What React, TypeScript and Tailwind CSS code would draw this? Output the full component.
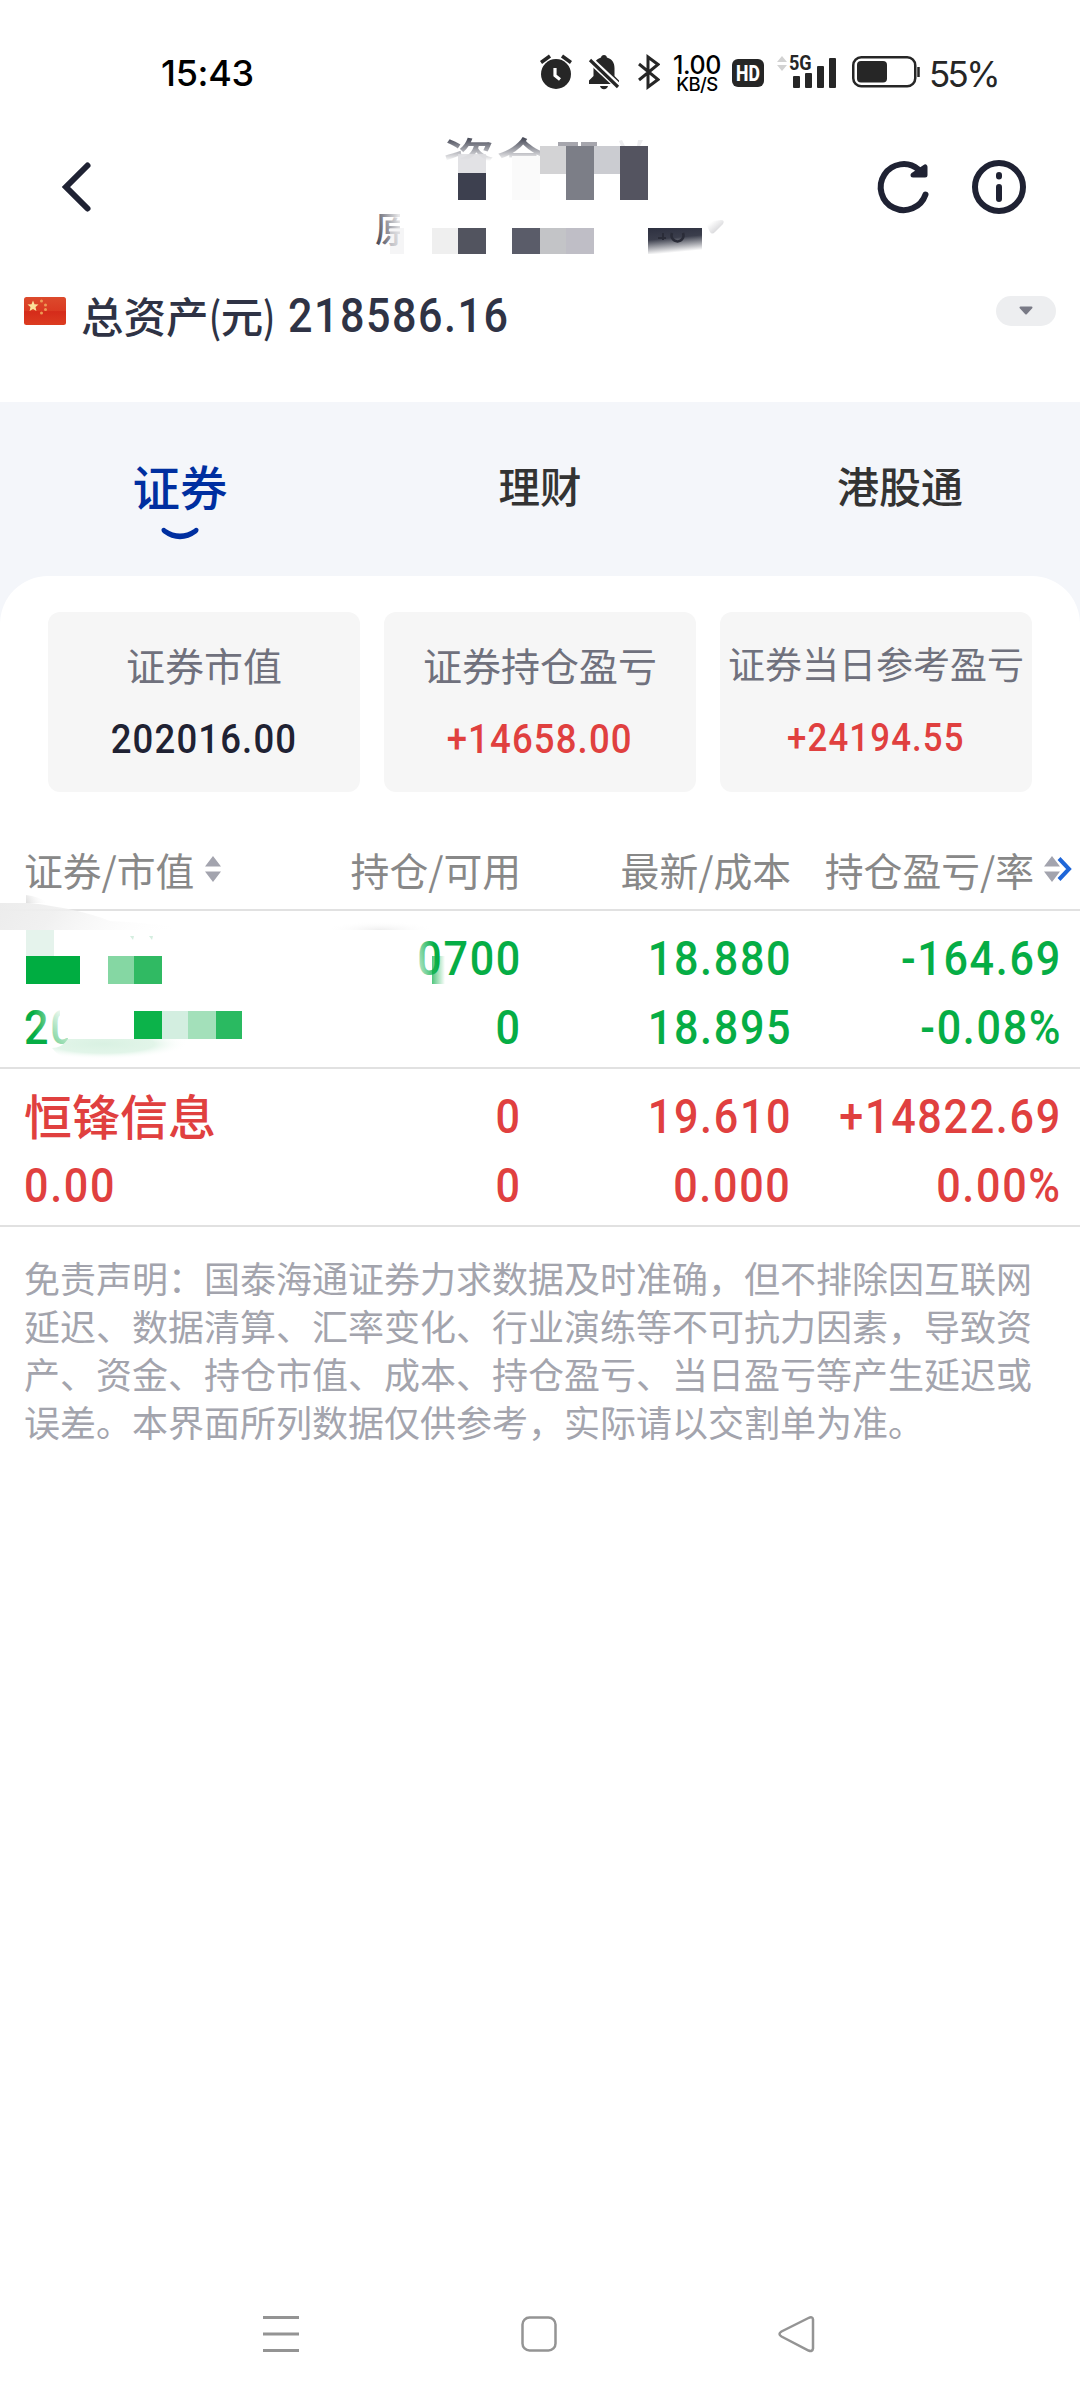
import React from 'react';
import clsx from 'clsx';

interface Stat {
  label: string;
  value: string;
  valueColor: string;
  compact?: boolean;
}

interface Holding {
  name: React.ReactNode;
  marketValue: React.ReactNode;
  position: React.ReactNode;
  available: string;
  latest: string;
  cost: string;
  profit: string;
  rate: string;
  color: string;
}

const stats: Stat[] = [
  { label: '证券市值', value: '202016.00', valueColor: 'text-[#1f2233]' },
  { label: '证券持仓盈亏', value: '+14658.00', valueColor: 'text-[#e0403f]' },
  { label: '证券当日参考盈亏', value: '+24194.55', valueColor: 'text-[#e0403f]', compact: true },
];

const holdings: Holding[] = [
  {
    name: '',
    marketValue: '20',
    position: '0700',
    available: '0',
    latest: '18.880',
    cost: '18.895',
    profit: '-164.69',
    rate: '-0.08%',
    color: 'text-[#06ad45]',
  },
  {
    name: '恒锋信息',
    marketValue: '0.00',
    position: '0',
    available: '0',
    latest: '19.610',
    cost: '0.000',
    profit: '+14822.69',
    rate: '0.00%',
    color: 'text-[#e0403f]',
  },
];

const disclaimer =
  '免责声明：国泰海通证券力求数据及时准确，但不排除因互联网延迟、数据清算、汇率变化、行业演练等不可抗力因素，导致资产、资金、持仓市值、成本、持仓盈亏、当日盈亏等产生延迟或误差。本界面所列数据仅供参考，实际请以交割单为准。';

const StatusBar = () => (
  <div className="flex h-[144px] items-center justify-between pr-[82px] pl-[161px] font-['Inter','Noto_Sans_CJK_SC',sans-serif] text-[#262626]">
    <span className="mt-[2px] text-[36px] leading-none font-medium tracking-[-0.3px] text-black">15:43</span>
    <div className="flex items-center">
      <svg className="mr-4" width="32" height="36" viewBox="0 0 32 36" fill="none">
        <circle cx="16" cy="20" r="15" fill="#262626" />
        <path d="M1 8.500 10 2M31 8.500 22 2" stroke="#262626" strokeWidth="3.600" />
        <path d="M15 14v7.500l5 4" stroke="#fff" strokeWidth="3.200" />
      </svg>
      <svg className="mr-[18px]" width="32" height="36" viewBox="0 0 32 36">
        <path
          d="M16 1c1.800 0 2.700 1.200 2.900 2.600C24 5 26.500 9 26.500 14v8l4.500 4.500V30H1v-3.500L5.500 22v-8c0-5 3-9 7.500-10.400C13.300 2.200 14.200 1 16 1zM12 32h8c-.4 2-1.900 3.200-4 3.200S12.400 34 12 32z"
          fill="#262626"
        />
        <path d="M-1 3 31 33" stroke="#fff" strokeWidth="7" />
        <path d="M2 6 30 33" stroke="#262626" strokeWidth="3.200" />
      </svg>
      <svg className="mr-[13px]" width="22" height="36" viewBox="0 0 22 36" fill="none">
        <path d="M1 10 20 25.500 10 33V3l10 7.500L1 26" stroke="#262626" strokeWidth="3" />
      </svg>
      <div className="mt-[3px] mr-[11px] flex w-[48px] flex-col items-center text-black">
        <span className="text-[25px] leading-[20px] font-medium tracking-[-0.4px]">1.00</span>
        <span className="text-[18.500px] leading-[18px] font-medium tracking-[-0.600px]">KB/S</span>
      </div>
      <span className="mt-[2px] mr-[12px] flex h-[28px] w-[32px] items-center justify-center rounded-[6px] bg-[#262626] font-['Roboto',sans-serif] text-[22px] font-extrabold text-white">
        <span className="scale-x-[0.8]">HD</span>
      </span>
      <div className="relative mr-4 h-[34px] w-[60px]">
        <svg width="61" height="34" viewBox="0 0 61 34" fill="#262626">
          <path d="M1 7 6 1l5 6zM1 10h10l-5 6z" fill="#d2d2d2" />
          <rect x="17" y="21" width="7" height="12" rx="1" />
          <rect x="29" y="18" width="7" height="15" rx="1" />
          <rect x="41" y="11" width="7" height="22" rx="1" />
          <rect x="53" y="3" width="7" height="30" rx="1" />
        </svg>
        <span className="absolute top-0 left-[13px] origin-left scale-x-[0.86] font-['Roboto',sans-serif] text-[21px] leading-[17px] font-bold">
          5G
        </span>
      </div>
      <svg className="mr-[9px]" width="68" height="32" viewBox="0 0 68 32" fill="none">
        <rect x="1.250" y="1.250" width="62" height="29" rx="8" stroke="#262626" strokeWidth="2.500" />
        <rect x="5" y="5" width="30" height="21.500" rx="4" fill="#262626" />
        <path d="M66.500 11v10" stroke="#262626" strokeWidth="2.500" />
      </svg>
      <span className="mt-[4px] w-[69px] text-[35px] leading-none font-normal tracking-[-2.700px]">55%</span>
    </div>
  </div>
);

// Mosaic painted over the account title and number
const TitleMosaic = () => (
  <svg className="absolute inset-0" width="380" height="140" viewBox="360 130 380 140">
    <defs>
      <linearGradient id="fadeDown" x1="0" y1="0" x2="0" y2="1">
        <stop offset="0" stopColor="#fff" stopOpacity="0.100" />
        <stop offset="1" stopColor="#fff" />
      </linearGradient>
      <linearGradient id="fadeRight" x1="0" y1="1" x2="1" y2="0.600">
        <stop offset="0" stopColor="#fff" stopOpacity="0" />
        <stop offset="1" stopColor="#fff" stopOpacity="0.900" />
      </linearGradient>
      <linearGradient id="darkFade" x1="0" y1="0" x2="0.200" y2="1">
        <stop offset="0" stopColor="#2d3040" />
        <stop offset="0.450" stopColor="#3b3e4c" />
        <stop offset="1" stopColor="#fff" />
      </linearGradient>
      <linearGradient id="tick" x1="0" y1="0" x2="1" y2="1">
        <stop offset="0.200" stopColor="#fff" />
        <stop offset="1" stopColor="#c4c4c8" />
      </linearGradient>
    </defs>
    <rect x="440" y="136" width="220" height="25" fill="url(#fadeDown)" />
    <rect x="440" y="161" width="220" height="46" fill="#fff" />
    <path d="M558 142h20v4h-14v6h-6zM581 142h16v4h-16z" fill="#a6a6ad" />
    <path d="M619 141l3-1 3 6h-4zM638 140h5l-3 6h-3z" fill="#ececee" />
    <rect x="458" y="154" width="28" height="19" fill="#dddde0" fillOpacity="0.850" />
    <rect x="458" y="173" width="28" height="27" fill="#3d404f" />
    <rect x="512" y="156" width="28" height="44" fill="#fafafa" />
    <rect x="540" y="146" width="26" height="28" fill="#d3d3d5" />
    <rect x="566" y="146" width="28" height="54" fill="#7c7e87" />
    <rect x="594" y="146" width="26" height="28" fill="#cbccd1" />
    <rect x="620" y="146" width="28" height="54" fill="#545460" />
    <rect x="374" y="206" width="30" height="52" fill="url(#fadeRight)" />
    <rect x="400" y="206" width="16" height="52" fill="#fff" />
    <rect x="390" y="228" width="14" height="26" fill="#ececee" fillOpacity="0.500" />
    <rect x="432" y="228" width="26" height="26" fill="#efefef" />
    <rect x="458" y="228" width="28" height="26" fill="#52545f" />
    <rect x="512" y="228" width="28" height="26" fill="#5a5c69" />
    <rect x="540" y="228" width="26" height="26" fill="#c3c4c7" />
    <rect x="566" y="228" width="28" height="26" fill="#bfbec6" />
    <rect x="648" y="228" width="54" height="26" fill="url(#darkFade)" />
    <path d="M658 238h8m-3-5v7" stroke="#2a2c38" strokeWidth="2" />
    <path d="M672 233a6 6 0 1 0 11 0" stroke="#2a2c38" strokeWidth="2.500" fill="none" />
    <path d="M707 226c-1-2 2-4 6-5l8-1q4 0 2 4l-8 8q-3 3-5 0z" fill="url(#tick)" />
  </svg>
);

const Header = () => (
  <div className="flex h-[126px] items-start pr-[53px] pl-[60px]">
    <svg className="mt-[14px]" width="34" height="58" viewBox="0 0 34 58" fill="none">
      <path d="M27.500 7.500 6 29 27.500 50.500" stroke="#1f2233" strokeWidth="6" strokeLinecap="round" />
    </svg>
    <div className="relative -mt-[14px] ml-[266px] h-[140px] w-[380px]">
      <p className="-mt-[4px] pl-[83px] text-[52px] leading-[68px] font-medium tracking-[2px] whitespace-nowrap text-[#1f2233]">
        资金
      </p>
      <p className="pt-[2px] pl-[15px] text-[36px] leading-[62px] font-medium text-[#1f2233]">原</p>
      <TitleMosaic />
    </div>
    <div className="mt-[14px] ml-auto flex gap-[38px]">
      <svg width="58" height="58" viewBox="0 0 58 58" fill="none">
        <path d="M50.500 36.500A23 23 0 1 1 43.500 11.500" stroke="#1f2233" strokeWidth="6" strokeLinecap="round" />
        <path d="M50 9V17H38z" fill="#1f2233" stroke="#1f2233" strokeWidth="5" strokeLinejoin="round" />
      </svg>
      <svg width="56" height="58" viewBox="0 0 56 58" fill="none" stroke="#1f2233" strokeWidth="6" strokeLinecap="round">
        <circle cx="28" cy="29" r="24" />
        <path d="M28 17v1.500M28 29v12" />
      </svg>
    </div>
  </div>
);

const ChinaFlag = () => (
  <svg width="42" height="28" viewBox="0 0 42 28">
    <defs>
      <linearGradient id="flag" x1="0" y1="0" x2="0" y2="1">
        <stop offset="0" stopColor="#dc4a2c" />
        <stop offset="0.500" stopColor="#da3a22" />
        <stop offset="0.520" stopColor="#d52b1a" />
        <stop offset="1" stopColor="#dc3c20" />
      </linearGradient>
    </defs>
    <rect width="42" height="28" rx="2.500" fill="url(#flag)" />
    <path d="m9 3.500 1.500 3.700 4 .3-3 2.600.9 3.900L9 11.900 5.600 14l.9-3.900-3-2.600 4-.3z" fill="#fbe29a" />
    <g fill="#ee9c55">
      <circle cx="17.500" cy="4" r="1.500" />
      <circle cx="21.500" cy="8" r="1.500" />
      <circle cx="21.500" cy="12.500" r="1.500" />
      <circle cx="17.500" cy="16" r="1.500" />
    </g>
  </svg>
);

const TotalAssets = () => (
  <div className="flex h-[132px] items-start justify-between px-6 pt-[26px]">
    <div className="flex items-start text-[#2f3345]">
      <div className="mt-[1px]">
        <ChinaFlag />
      </div>
      <span className="-mt-[1px] ml-[15px] flex w-[207px] text-[42.500px] leading-[40px] font-medium whitespace-nowrap">
        总资产
        <span className="origin-left scale-x-[0.8]">(</span>
        <span className="-ml-[3px]">元</span>
        <span className="origin-left scale-x-[0.8]">)</span>
      </span>
      <span className="origin-left scale-x-[0.88] font-['Roboto',sans-serif] text-[49px] leading-[39px] font-medium tracking-[1.700px]">
        218586.16
      </span>
    </div>
    <button className="flex h-[30px] w-[60px] items-center justify-center rounded-full bg-[#edeef0]">
      <svg width="14" height="10" viewBox="0 0 14 10">
        <path d="M1.500 1.500h11L7 7.500z" fill="#797a86" stroke="#797a86" strokeWidth="2" strokeLinejoin="round" />
      </svg>
    </button>
  </div>
);

const Tabs = () => (
  <div className="grid h-[174px] grid-cols-3 pt-[49px] text-center font-medium text-[#333]">
    <div className="flex flex-col items-center text-[#002fa0]">
      <span className="text-[47.500px] leading-[70px]">证券</span>
      <svg className="mt-[4px]" width="40" height="16" viewBox="0 0 40 16" fill="none">
        <path d="M2 3.500Q4 2 6 4 20 13 34 4q2-2 4-.5 1.500 2-1 4.500Q20 20.500 3 8 .5 5.500 2 3.500z" fill="#002fa0" />
      </svg>
    </div>
    <span className="text-[41.500px] leading-[68px]">理财</span>
    <span className="text-[42px] leading-[68px]">港股通</span>
  </div>
);

const StatCard: React.FC<Stat> = ({ label, value, valueColor, compact }) => (
  <div className="flex h-[180px] flex-col items-center rounded-[12px] bg-[#f6f6f6] pt-[26px]">
    <span
      className={clsx(
        'whitespace-nowrap text-[#70717d]',
        compact ? 'text-[37px] leading-[51px]' : 'text-[39px] leading-[53px]'
      )}
    >
      {label}
    </span>
    <span
      className={clsx(
        "scale-x-[0.88] font-['Roboto',sans-serif] leading-[52px] font-medium tracking-[1.300px]",
        compact ? 'mt-[23px] text-[39.500px]' : 'mt-[22px] text-[41.500px]',
        valueColor
      )}
    >
      {value}
    </span>
  </div>
);

const SortArrows = () => (
  <svg width="18" height="28" viewBox="0 0 18 28" fill="#a3a4ae">
    <path d="M1 11.500 9 1l8 10.500zM1 16.500h16L9 27z" />
  </svg>
);

const TableHead = () => (
  <div className="grid h-[82px] grid-cols-[227px_270px_270px_270px] items-center border-b-2 border-[#e1e1e1] pl-6 text-[38.800px] leading-[60px] whitespace-nowrap text-[#888]">
    <div className="flex items-center gap-[10px]">
      证券/市值
      <SortArrows />
    </div>
    <div className="text-right">持仓/可用</div>
    <div className="text-right">最新/成本</div>
    <div className="relative flex items-center justify-end gap-[9px]">
      持仓盈亏/率
      <svg className="absolute -right-[11px]" width="16" height="24" viewBox="0 0 16 24" fill="none">
        <path d="M3 1.500 13 12 3 22.500" stroke="#1f66d8" strokeWidth="4" />
      </svg>
      <div className="relative flex">
        <SortArrows />
      </div>
    </div>
  </div>
);

const Figure: React.FC<{ children: React.ReactNode; left?: boolean }> = ({ children, left }) => (
  <span
    className={clsx(
      "inline-block scale-x-[0.88] font-['Roboto',sans-serif] text-[49px] font-medium tracking-[1.900px]",
      left ? 'origin-left' : '-mr-[1px] origin-right'
    )}
  >
    {children}
  </span>
);

const HoldingRow: React.FC<Holding> = (row) => (
  <div
    className={clsx(
      'grid h-[158px] grid-cols-[227px_270px_270px_270px] border-b-2 border-[#e1e1e1] pt-[13px] pl-6 text-right leading-[69px] whitespace-nowrap',
      row.color
    )}
  >
    <div className="text-left">
      <div className="-mt-[2px] h-[71px] text-[48px] font-medium">{row.name}</div>
      <div className="h-[69px]">
        <Figure left>{row.marketValue}</Figure>
      </div>
    </div>
    <div>
      <div className="h-[69px]">
        <Figure>{row.position}</Figure>
      </div>
      <div className="h-[69px]">
        <Figure>{row.available}</Figure>
      </div>
    </div>
    <div>
      <div className="h-[69px]">
        <Figure>{row.latest}</Figure>
      </div>
      <div className="h-[69px]">
        <Figure>{row.cost}</Figure>
      </div>
    </div>
    <div>
      <div className="h-[69px]">
        <Figure>{row.profit}</Figure>
      </div>
      <div className="h-[69px]">
        <Figure>{row.rate}</Figure>
      </div>
    </div>
  </div>
);

// Mosaic and smudges painted over the first holding
const RowMosaic = () => (
  <svg className="absolute top-0 left-0" width="540" height="172" viewBox="0 895 540 172">
    <defs>
      <linearGradient id="smudge" x1="0" y1="0" x2="1" y2="0.100">
        <stop offset="0" stopColor="#ececec" />
        <stop offset="0.300" stopColor="#efefef" stopOpacity="0.900" />
        <stop offset="1" stopColor="#fff" stopOpacity="0" />
      </linearGradient>
      <radialGradient id="smudgeSmall" cx="0.500" cy="1" r="0.500">
        <stop offset="0" stopColor="#eeeeee" />
        <stop offset="1" stopColor="#fff" stopOpacity="0" />
      </radialGradient>
      <linearGradient id="cornerSmudge" x1="0" y1="1" x2="1" y2="0.800">
        <stop offset="0" stopColor="#dedede" />
        <stop offset="1" stopColor="#fff" stopOpacity="0" />
      </linearGradient>
      <linearGradient id="whiteRight" x1="0" y1="0.600" x2="1" y2="0.400">
        <stop offset="0" stopColor="#fff" stopOpacity="0" />
        <stop offset="1" stopColor="#fff" stopOpacity="0.500" />
      </linearGradient>
      <linearGradient id="zeroFade" x1="0" y1="1" x2="0.500" y2="0">
        <stop offset="0" stopColor="#fff" stopOpacity="0.400" />
        <stop offset="1" stopColor="#fff" />
      </linearGradient>
      <linearGradient id="whiteLeft" x1="0" y1="1" x2="1" y2="0.700">
        <stop offset="0" stopColor="#fff" />
        <stop offset="1" stopColor="#fff" stopOpacity="0" />
      </linearGradient>
      <linearGradient id="drip" x1="0" y1="0" x2="1" y2="0">
        <stop offset="0" stopColor="#06ad45" stopOpacity="0.700" />
        <stop offset="1" stopColor="#06ad45" stopOpacity="0" />
      </linearGradient>
      <radialGradient id="mint" cx="0.380" cy="0.200" r="0.620">
        <stop offset="0" stopColor="#d9f1e2" />
        <stop offset="0.600" stopColor="#e2f5e9" />
        <stop offset="1" stopColor="#fff" stopOpacity="0" />
      </radialGradient>
    </defs>
    <path d="M26 895q12 1 22 8H26z" fill="url(#cornerSmudge)" />
    <path d="M0 903h30q50 6 80 18 45 2 90 9H0z" fill="url(#smudge)" />
    <rect x="325" y="912" width="110" height="18" fill="url(#smudgeSmall)" />
    <rect x="26" y="930" width="28" height="27" fill="#e5f3ec" />
    <rect x="26" y="956" width="54" height="28" fill="#00ad41" />
    <rect x="108" y="956" width="26" height="28" fill="#85d7a3" />
    <rect x="134" y="956" width="28" height="28" fill="#30ba63" />
    <path d="M130 936h4l-1 4zM149 936h4l-1 4z" fill="#d5eee0" />
    <rect x="34" y="1004" width="16" height="36" fill="url(#whiteRight)" />
    <rect x="50" y="1004" width="20" height="42" fill="url(#zeroFade)" />
    <rect x="60" y="1004" width="22" height="34" fill="#fff" />
    <rect x="68" y="1004" width="14" height="42" fill="#fff" />
    <rect x="134" y="1011" width="28" height="28" fill="#0cb34a" />
    <rect x="162" y="1011" width="26" height="28" fill="#d3eee0" />
    <rect x="188" y="1011" width="28" height="28" fill="#a3e0ba" />
    <rect x="216" y="1011" width="26" height="28" fill="#2aba61" />
    <path d="M68 1039h120v18q-26-2-46 3-40 7-72 1-12-5-18-13 10 0 16-9z" fill="url(#mint)" />
    <rect x="412" y="936" width="26" height="42" fill="url(#whiteLeft)" />
    <rect x="432" y="956" width="13" height="28" fill="url(#drip)" />
  </svg>
);

const NavBar = () => (
  <div className="mt-auto flex h-[132px] items-center justify-between pr-[263px] pl-[261px]">
    <svg width="40" height="40" viewBox="0 0 40 40" stroke="#949494" strokeWidth="3">
      <path d="M2 3.500h36M2 20h36M2 36.500h36" />
    </svg>
    <svg width="40" height="40" viewBox="0 0 40 40" fill="none" stroke="#949494" strokeWidth="2.500">
      <rect x="3.500" y="3.500" width="33" height="33" rx="7" />
    </svg>
    <svg width="40" height="40" viewBox="0 0 40 40" fill="none" stroke="#949494" strokeWidth="2.500">
      <path d="M31.500 4 4.500 17.500q-4 2.500 0 5L31.500 36.500q4 1.500 4.500-2v-29q-.5-3.500-4.500-1.500z" />
    </svg>
  </div>
);

const App: React.FC = () => {
  return (
    <div className="flex h-[2400px] w-[1080px] flex-col overflow-hidden bg-white font-['Noto_Sans_CJK_SC',sans-serif]">
      <StatusBar />
      <Header />
      <TotalAssets />

      <div className="bg-[#f4f6fa]">
        <Tabs />
        <div className="rounded-t-[48px] bg-white pt-9">
          <div className="grid grid-cols-3 gap-6 px-12">
            {stats.map((stat) => (
              <StatCard key={stat.label} {...stat} />
            ))}
          </div>
        </div>
      </div>

      {/* Holdings table */}
      <div className="pt-[37px]">
        <TableHead />
        <div className="relative">
          {holdings.map((row) => (
            <HoldingRow key={row.latest} {...row} />
          ))}
          <div className="absolute -top-4 left-0">
            <RowMosaic />
          </div>
        </div>
      </div>

      <p className="w-[1056px] pt-[26px] pr-5 pl-6 text-[36px] leading-[48px] text-[#a3a4ad]">{disclaimer}</p>

      <NavBar />
    </div>
  );
};

export default App;
